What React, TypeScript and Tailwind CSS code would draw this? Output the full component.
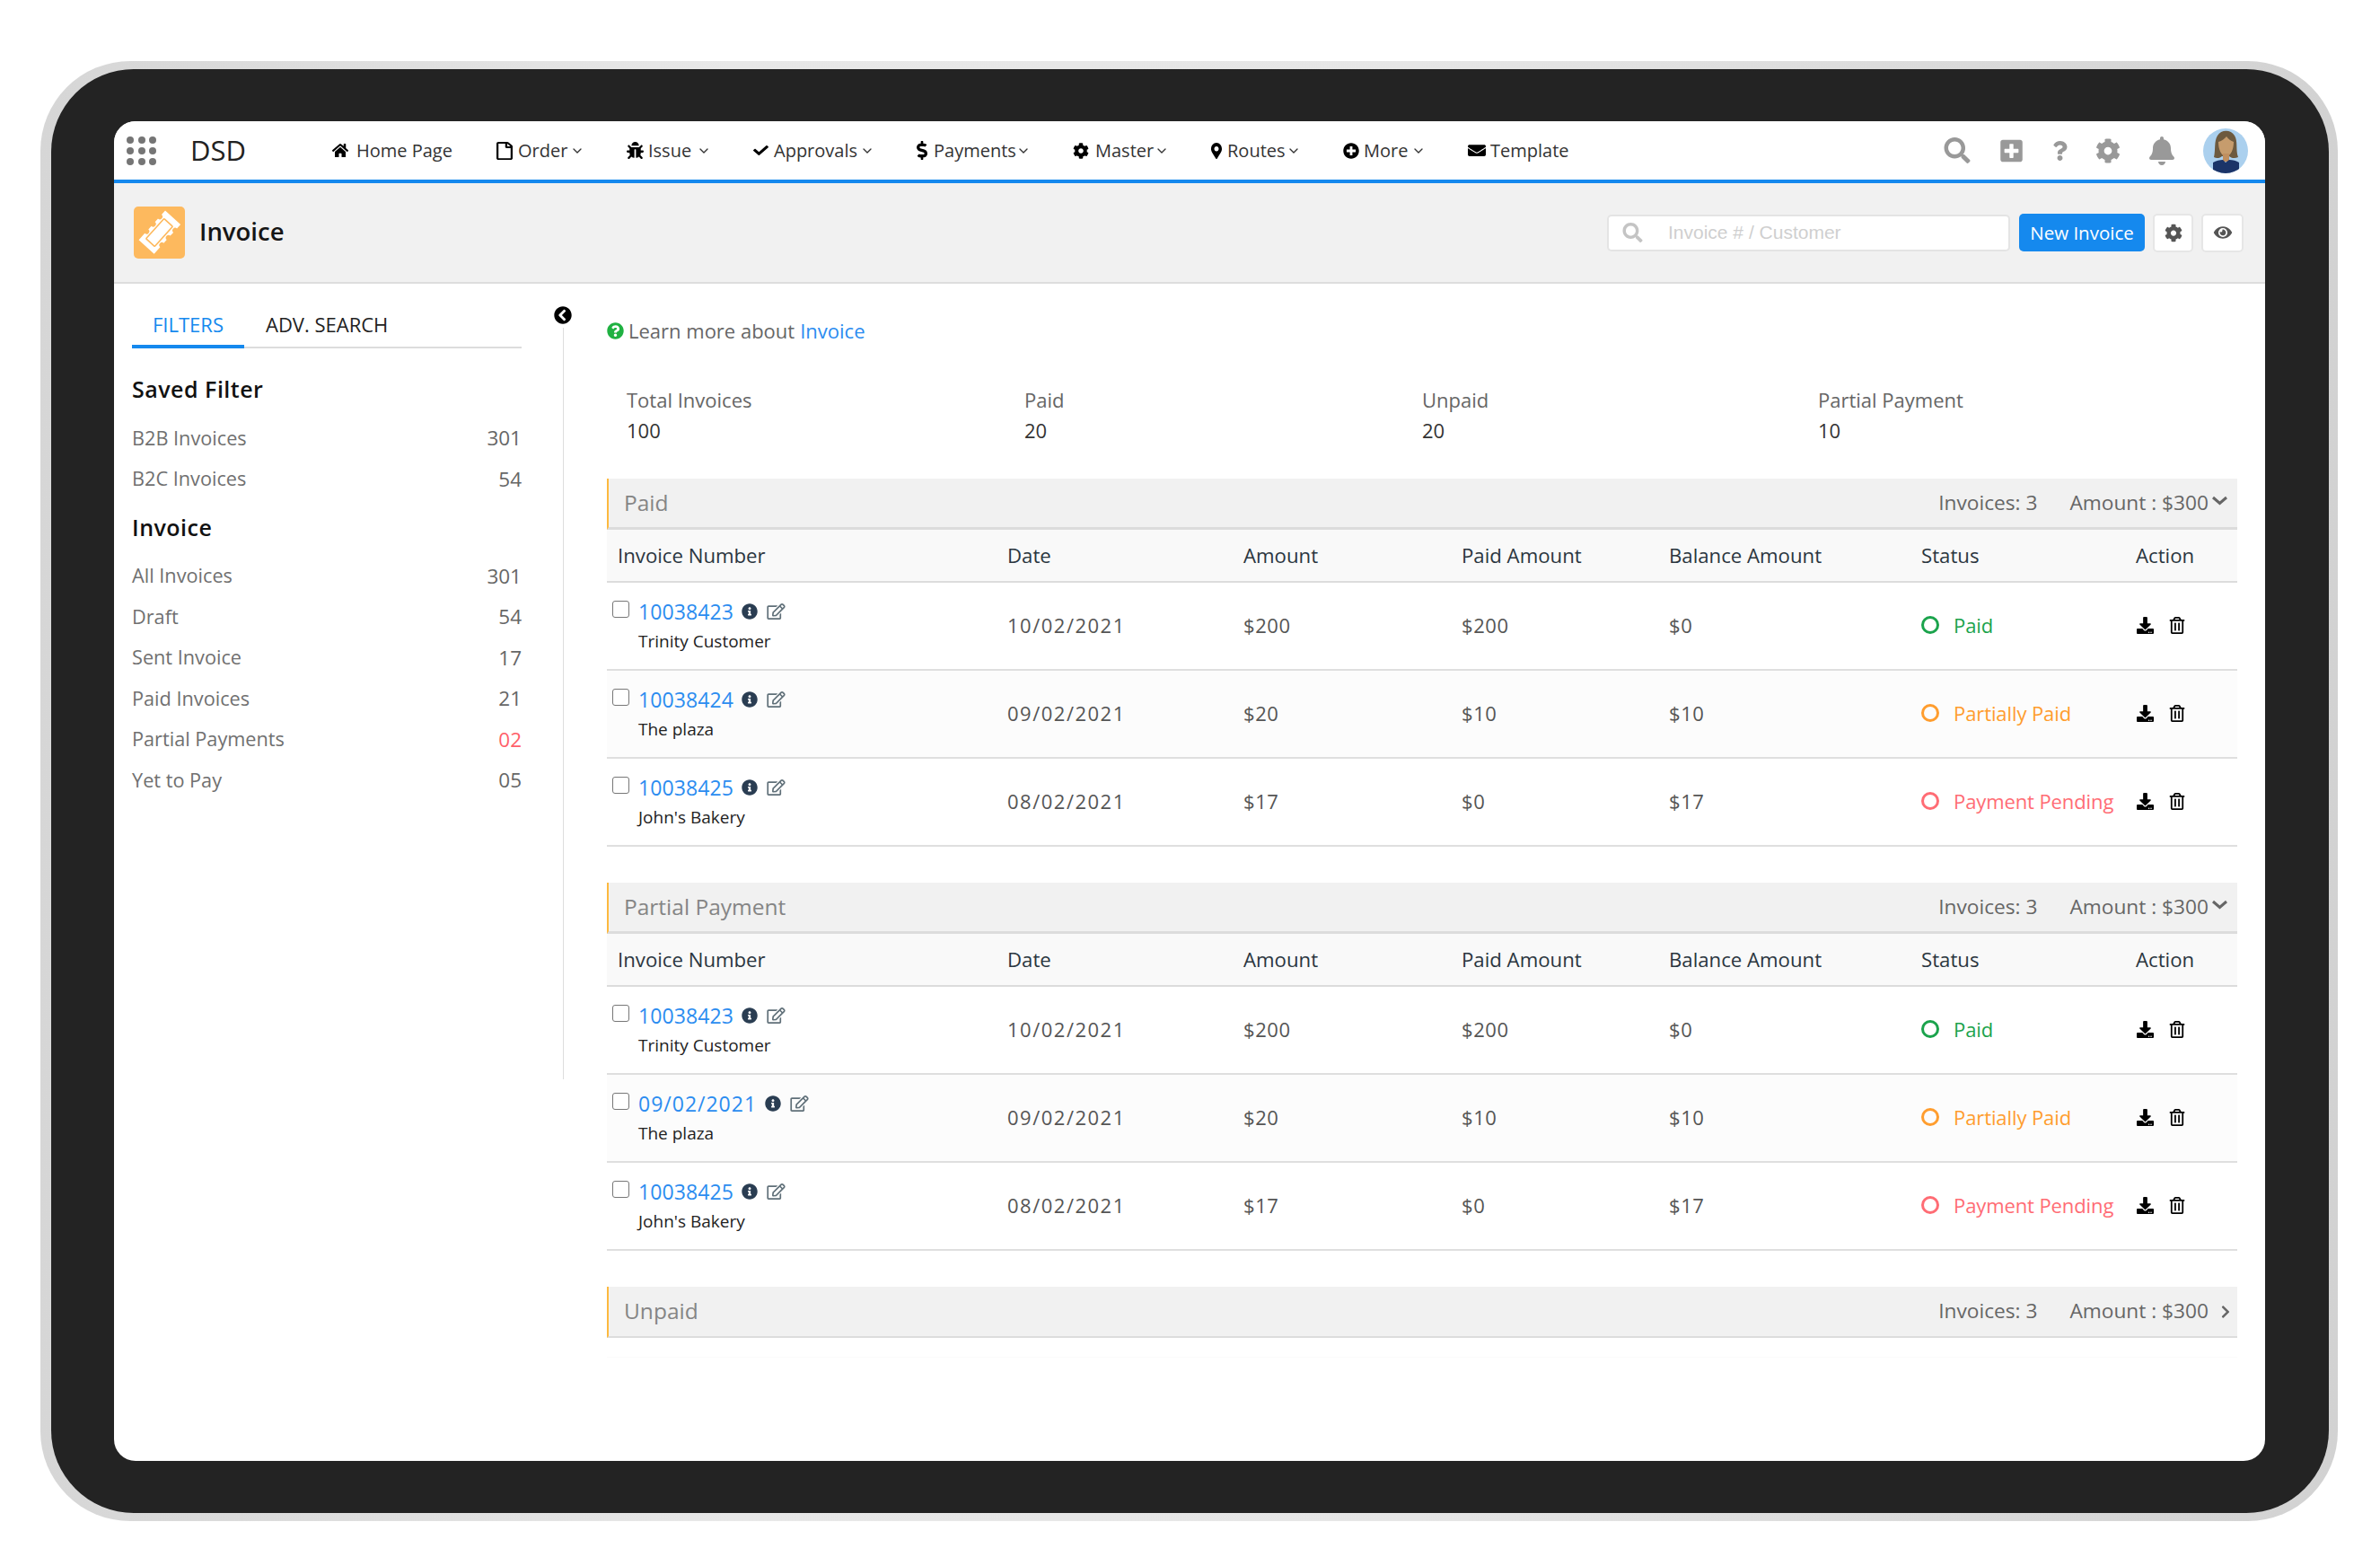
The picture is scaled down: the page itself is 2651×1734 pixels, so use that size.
import React from "react";
import {
  FaHome, FaRegFile, FaBug, FaCheck, FaDollarSign, FaCog, FaMapMarkerAlt, FaPlusCircle, FaEnvelope,
  FaSearch, FaPlusSquare, FaQuestion, FaBell, FaEye, FaInfoCircle, FaRegEdit, FaDownload, FaRegTrashAlt,
  FaChevronCircleLeft, FaQuestionCircle, FaChevronRight,
} from "react-icons/fa";
import { ChevronDown } from "lucide-react";

const nav = [
  { label: "Home Page", Icon: FaHome, w: 18, h: 17, gap: 9, chev: false, tw: "w-[108px]" },
  { label: "Order", Icon: FaRegFile, w: 18, h: 20, gap: 6, chev: true, tw: "w-[56px]" },
  { label: "Issue", Icon: FaBug, w: 19, h: 19, gap: 5, chev: true, tw: "w-[52px]" },
  { label: "Approvals", Icon: FaCheck, w: 17, h: 15, gap: 6, chev: true, tw: "w-[94px]" },
  { label: "Payments", Icon: FaDollarSign, w: 12, h: 21, gap: 7, chev: true, tw: "w-[90px]" },
  { label: "Master", Icon: FaCog, w: 18, h: 18, gap: 7, chev: true, tw: "w-[64px]" },
  { label: "Routes", Icon: FaMapMarkerAlt, w: 12, h: 18, gap: 6, chev: true, tw: "w-[64px]" },
  { label: "More", Icon: FaPlusCircle, w: 18, h: 18, gap: 5, chev: true, tw: "w-[51px]" },
  { label: "Template", Icon: FaEnvelope, w: 20, h: 17, gap: 5, chev: false, tw: "w-[88px]" },
];

const saved = [["B2B Invoices", "301"], ["B2C Invoices", "54"]];
const invoiceFilters = [
  ["All Invoices", "301"], ["Draft", "54"], ["Sent Invoice", "17"], ["Paid Invoices", "21"],
  ["Partial Payments", "02"], ["Yet to Pay", "05"],
];
const summary = [["Total Invoices", "100"], ["Paid", "20"], ["Unpaid", "20"], ["Partial Payment", "10"]];

const colors: Record<string, string> = {
  Paid: "text-[#1ba34c]",
  "Partially Paid": "text-[#ff9d2e]",
  "Payment Pending": "text-[#ff6c74]",
};
const rings: Record<string, string> = {
  Paid: "border-[#1ba34c]",
  "Partially Paid": "border-[#ff9d2e]",
  "Payment Pending": "border-[#ff6c74]",
};

const baseRows = [
  { no: "10038423", cust: "Trinity Customer", date: "10/02/2021", amt: "$200", paid: "$200", bal: "$0", status: "Paid" },
  { no: "10038424", cust: "The plaza", date: "09/02/2021", amt: "$20", paid: "$10", bal: "$10", status: "Partially Paid" },
  { no: "10038425", cust: "John's Bakery", date: "08/02/2021", amt: "$17", paid: "$0", bal: "$17", status: "Payment Pending" },
];
const secondRows = baseRows.map((r, i) => (i === 1 ? { ...r, no: "09/02/2021" } : r));

const gridCols = "grid grid-cols-[434px_263px_243px_231px_281px_239px_125px]";

function SectionBar({ title, open }: { title: string; open: boolean }) {
  return (
    <div className={`flex h-[57px] items-center bg-[#f1f1f1] border-l-2 border-l-[#fdb93f] pl-[17px] border-b-[#dcdcdc] ${open ? "border-b-[3px]" : "border-b-2"}`}>
      <span className="text-[24.5px] text-[#858585]">{title}</span>
      <span className="ml-auto text-[22.7px] text-[#666]">Invoices: 3</span>
      <span className="ml-[36px] text-[22.7px] text-[#666]">Amount : $300</span>
      {open ? (
        <svg viewBox="0 0 19 11" className="mb-[6px] ml-[3px] mr-[10px] h-[11px] w-[19px] text-[#666]">
          <polyline points="2,2 9.5,8.5 17,2" fill="none" stroke="currentColor" strokeWidth="3" />
        </svg>
      ) : (
        <FaChevronRight preserveAspectRatio="none" className="ml-[14px] mr-[8px] h-[16px] w-[10px] text-[#666]" />
      )}
    </div>
  );
}

function InvoiceTable({ rows, title }: { rows: typeof baseRows; title: string }) {
  return (
    <section className="mb-[40px]">
      <SectionBar title={title} open />
      <div className={`${gridCols} h-[59px] items-center bg-[#f9f9f9] border-b-2 border-[#dcdcdc] text-[22.2px] font-medium text-[#2b3640]`}>
        <span className="pl-[12px]">Invoice Number</span>
        <span className="pl-[12px]">Date</span>
        <span className="pl-[12px]">Amount</span>
        <span className="pl-[12px]">Paid Amount</span>
        <span className="pl-[12px]">Balance Amount</span>
        <span className="pl-[12px]">Status</span>
        <span className="pl-[12px]">Action</span>
      </div>
      {rows.map((r, i) => (
        <div key={i} className={`${gridCols} h-[98px] items-center border-b-2 border-[#dfdfdf] text-[22px] text-[#555] ${i === 1 ? "bg-[#fcfcfc]" : "bg-white"}`}>
          <div className="flex h-full items-start pl-[6px] pt-[16px]">
            <input type="checkbox" readOnly className="mt-[4px] h-[19px] w-[19px] appearance-none rounded-[3px] border-[1.5px] border-[#777] bg-white" />
            <div className="ml-[10px]">
              <div className="flex h-[32px] items-center">
                <a className={`text-[23px] text-[#2b8cf0] ${r.no.includes("/") ? "tracking-[1px]" : "tracking-[0.1px]"}`}>{r.no}</a>
                <FaInfoCircle className="ml-[9px] h-[18px] w-[18px] text-[#2a3d52]" />
                <FaRegEdit className="ml-[10px] h-[18px] w-[21px] text-[#5f6f78]" />
              </div>
              <div className="flex h-[34px] items-center text-[19px] text-[#222]">{r.cust}</div>
            </div>
          </div>
          <span className="pb-[2px] pl-[12px] tracking-[1.5px]">{r.date}</span>
          <span className="pb-[2px] pl-[12px] tracking-[0.6px]">{r.amt}</span>
          <span className="pb-[2px] pl-[12px] tracking-[0.6px]">{r.paid}</span>
          <span className="pb-[2px] pl-[12px] tracking-[0.6px]">{r.bal}</span>
          <div className="flex items-center pb-[2px] pl-[12px]">
            <span className={`h-[20px] w-[20px] rounded-full border-[3px] ${rings[r.status]}`} />
            <span className={`ml-[16px] whitespace-nowrap tracking-[-0.1px] ${colors[r.status]}`}>{r.status}</span>
          </div>
          <div className="flex items-center pb-[2px] pl-[11px]">
            <FaDownload className="h-[19px] w-[23px] text-black" />
            <FaRegTrashAlt className="ml-[15px] h-[19px] w-[18px] text-black" />
          </div>
        </div>
      ))}
    </section>
  );
}

function Ticket() {
  return (
    <svg viewBox="0 0 57 58" className="h-[58px] w-[57px]">
      <g transform="rotate(42 28.5 29)">
        <path d="M17 7 h23 v6 a3 3 0 0 0 0 6 v5 a3 3 0 0 0 0 6 v5 a3 3 0 0 0 0 6 v10 h-23 v-10 a3 3 0 0 0 0 -6 v-5 a3 3 0 0 0 0 -6 v-5 a3 3 0 0 0 0 -6 z" fill="#fff" transform="translate(0 -0.5)" />
        <rect x="22" y="14" width="13" height="30" rx="1" fill="none" stroke="#fdb95e" strokeWidth="1.6" />
      </g>
    </svg>
  );
}

function Avatar() {
  return (
    <svg viewBox="0 0 50 50" className="h-[50px] w-[50px]">
      <defs>
        <clipPath id="av"><circle cx="25" cy="25" r="25" /></clipPath>
      </defs>
      <g clipPath="url(#av)">
        <rect width="50" height="50" fill="#abd0ee" />
        <path d="M12 32 C14 24 12 14 16 8 C20 1 31 1 35 8 C39 14 36 24 39 32 C35 34 31 33 29 31 L21 31 C19 33 15 34 12 32 Z" fill="#6d5a3f" />
        <path d="M17 15 C21 14 24 11 26 9 C28 12 31 14 34 15 C34 23 31 31 25.5 31 C20 31 17 23 17 15 Z" fill="#c69c6d" />
        <rect x="22" y="28" width="7" height="9" fill="#c08f5f" />
        <path d="M11 50 L11 38 C14 36 19 35 22 35 L25 38 L29 35 C33 35 37 36 40 38 L40 50 Z" fill="#1b3468" />
      </g>
    </svg>
  );
}

function FilterRow({ label, value }: { label: string; value: string }) {
  return (
    <div className="flex h-[45.5px] items-center justify-between text-[21.7px] text-[#707070]">
      <span>{label}</span>
      <span className={`text-[22.5px] ${value === "02" ? "text-[#ff5f6a]" : "text-[#666]"}`}>{value}</span>
    </div>
  );
}

export default function App() {
  const font = { fontFamily: '"Open Sans", "Noto Sans", sans-serif' };
  return (
    <div className="h-[1734px] w-[2651px] overflow-hidden bg-white pl-[45px] pt-[68px]" style={font}>
      <div className="h-[1626px] w-[2559px] rounded-[100px] bg-[linear-gradient(90deg,#d6d6d6_0%,#e8e8e8_30%,#e6e6e6_60%,#d2d2d2_100%)] pb-[9px] pl-[12px] pr-[10px] pt-[9px]">
        <div className="h-[1608px] w-[2537px] rounded-[92px] bg-[#232323] pl-[70px] pt-[58px]">
          <div className="flex h-[1492px] w-[2396px] flex-col overflow-hidden rounded-[24px] bg-white">
            {/* top nav */}
            <header className="flex h-[69px] shrink-0 items-center border-b-4 border-[#1589ee] bg-white pl-[14px] pr-[19px]">
              <div className="grid h-[32px] w-[34px] grid-cols-3 gap-x-[4px] gap-y-[4px]">
                {Array.from({ length: 9 }).map((_, i) => (
                  <span key={i} className="h-[8px] w-[8px] rounded-full bg-[#757575]" />
                ))}
              </div>
              <span className="ml-[37px] w-[158px] text-[31px] leading-none text-[#222]">DSD</span>
              <nav className="flex items-center gap-[48px] text-[20px] text-[#333]">
                {nav.map(({ label, Icon, w, h, gap, chev, tw }) => (
                  <div key={label} className="flex items-center">
                    <span style={{ width: w, height: h, marginRight: gap }} className="flex items-center justify-center text-black">
                      <Icon preserveAspectRatio="none" style={{ width: w, height: h }} />
                    </span>
                    <span className={`whitespace-nowrap ${tw}`}>{label}</span>
                    {chev && <ChevronDown className="-mr-[1px] ml-[2px] h-[16px] w-[16px] text-[#333]" strokeWidth={2} />}
                  </div>
                ))}
              </nav>
              <div className="ml-auto flex items-center text-[#999]">
                <FaSearch className="h-[29px] w-[30px]" />
                <FaPlusSquare className="ml-[32px] h-[28px] w-[27px]" />
                <FaQuestion className="ml-[32px] h-[22px] w-[17px]" />
                <FaCog className="ml-[31px] h-[28px] w-[28px]" />
                <FaBell className="ml-[31px] h-[32px] w-[30px]" />
                <span className="ml-[31px]"><Avatar /></span>
              </div>
            </header>

            {/* title bar */}
            <div className="flex h-[112px] shrink-0 items-center border-b-2 border-[#dddddd] bg-[#f1f1f1] pl-[22px] pr-[24px]">
              <div className="h-[58px] w-[57px] rounded-[5px] bg-[#fdb95e]"><Ticket /></div>
              <span className="mb-[2px] ml-[16px] text-[27.5px] font-semibold text-[#151515]">Invoice</span>
              <div className="relative ml-auto flex h-[41px] w-[449px] items-center rounded-[5px] border-2 border-[#e4e4e4] bg-white">
                <FaSearch className="ml-[15px] h-[22px] w-[23px] text-[#c4c4c4]" />
                <input readOnly placeholder="Invoice # / Customer" className="ml-[28px] w-[300px] bg-transparent text-[21px] outline-none placeholder:text-[#cfcfcf]" style={{ fontFamily: '"Liberation Sans", sans-serif' }} />
              </div>
              <button className="ml-[10px] h-[42px] w-[140px] rounded-[5px] bg-[#1589ee] text-center text-[20.5px] font-medium text-white">New Invoice</button>
              <button className="ml-[9px] flex h-[43px] w-[45px] items-center justify-center rounded-[5px] border-2 border-[#e6e6e6] bg-white">
                <FaCog className="h-[21px] w-[20px] text-[#555]" />
              </button>
              <button className="ml-[9px] flex h-[43px] w-[47px] items-center justify-center rounded-[5px] border-2 border-[#e6e6e6] bg-white">
                <FaEye className="h-[18px] w-[22px] text-[#555]" />
              </button>
            </div>

            {/* body */}
            <div className="flex min-h-0 flex-1">
              <aside className="w-[454px] shrink-0 pl-[20px]">
                <div className="flex h-[72px] items-end border-b-2 border-[#dddddd]">
                  <div className="-mb-[2px] flex h-[48px] w-[125px] justify-center border-b-4 border-[#1589ee] pt-[5px] text-[22px] leading-[32px] text-[#1589ee]">FILTERS</div>
                  <div className="-mb-[2px] ml-[24px] flex h-[48px] pt-[5px] text-[22px] leading-[32px] text-[#222]">ADV. SEARCH</div>
                </div>
                <h3 className="mt-[23px] flex h-[46px] items-center text-[25px] font-semibold tracking-[0.5px] text-[#111]">Saved Filter</h3>
                <div className="mt-[8.5px]">
                  {saved.map(([a, b]) => <FilterRow key={a} label={a} value={b} />)}
                </div>
                <h3 className="mt-[8.5px] flex h-[46px] items-center text-[25px] font-semibold tracking-[0.5px] text-[#111]">Invoice</h3>
                <div className="mt-[8px]">
                  {invoiceFilters.map(([a, b]) => <FilterRow key={a} label={a} value={b} />)}
                </div>
              </aside>

              <div className="relative ml-[46px] mt-[49px] h-[837px] w-px shrink-0 bg-[#dddddd]">
                <FaChevronCircleLeft className="absolute -left-[10px] -top-[24px] h-[20px] w-[20px] text-black" />
              </div>

              <main className="ml-[48px] w-[1816px] shrink-0">
                <div className="mt-[36px] flex h-[32px] items-center text-[22px] text-[#666]">
                  <FaQuestionCircle className="h-[19px] w-[19px] text-[#1fb141]" />
                  <span className="ml-[5px]">Learn more about</span>
                  <a className="ml-[6px] text-[#2b8cf0]">Invoice</a>
                </div>
                <div className="mt-[44px] grid grid-cols-[443px_443px_441px_1fr] pl-[22px]">
                  {summary.map(([l, v]) => (
                    <div key={l}>
                      <div className="flex h-[34px] items-center text-[22px] text-[#666]">{l}</div>
                      <div className="flex h-[34px] items-center text-[22px] text-[#333]">{v}</div>
                    </div>
                  ))}
                </div>
                <div className="mt-[37px]">
                  <InvoiceTable title="Paid" rows={baseRows} />
                  <InvoiceTable title="Partial Payment" rows={secondRows} />
                  <SectionBar title="Unpaid" open={false} />
                  <div className="mt-[21px] h-px bg-[#fbfbfb]" />
                </div>
              </main>
            </div>
          </div>
        </div>
      </div>
    </div>
  );
}
